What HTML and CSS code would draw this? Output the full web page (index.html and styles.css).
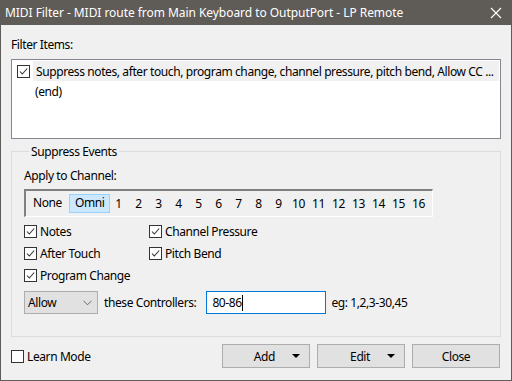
FILE: index.html
```html
<!DOCTYPE html>
<html lang="en">
<head>
<meta charset="UTF-8">
<title>MIDI Filter</title>
<link rel="stylesheet" href="styles.css">
</head>
<body>

<div class="window">
<!-- Title bar -->
<div class="titlebar">
<span class="title">MIDI Filter - MIDI route from Main Keyboard to OutputPort - LP Remote</span>
<svg class="close-x" width="12" height="12" viewBox="0 0 12 12"><path d="M1 1L11 11M11 1L1 11" stroke="#fff" stroke-width="1.2" fill="none"/></svg>
</div>

<div class="content">
<div class="label">Filter Items:</div>

<!-- Filter list -->
<div class="listbox">
<div class="list-row selected">
<span class="check on"><svg width="11" height="11" viewBox="0 0 11 11"><path d="M2 5.5L4.3 8L9.2 2.5" stroke="#333" stroke-width="1.1" fill="none"/></svg></span>
<span>Suppress notes, after touch, program change, channel pressure, pitch bend, Allow CC ...</span>
</div>
<div class="list-row end">(end)</div>
</div>

<!-- Suppress events group -->
<fieldset class="group">
<legend>Suppress Events</legend>
<div class="label">Apply to Channel:</div>

<div class="channels">
<span class="chan wide">None</span>
<span class="chan wide active">Omni</span>
<span class="chan">1</span>
<span class="chan">2</span>
<span class="chan">3</span>
<span class="chan">4</span>
<span class="chan">5</span>
<span class="chan">6</span>
<span class="chan">7</span>
<span class="chan">8</span>
<span class="chan">9</span>
<span class="chan">10</span>
<span class="chan">11</span>
<span class="chan">12</span>
<span class="chan">13</span>
<span class="chan">14</span>
<span class="chan">15</span>
<span class="chan">16</span>
</div>

<div class="options">
<label class="opt"><span class="check on"><svg width="11" height="11" viewBox="0 0 11 11"><path d="M2 5.5L4.3 8L9.2 2.5" stroke="#333" stroke-width="1.1" fill="none"/></svg></span>Notes</label>
<label class="opt"><span class="check on"><svg width="11" height="11" viewBox="0 0 11 11"><path d="M2 5.5L4.3 8L9.2 2.5" stroke="#333" stroke-width="1.1" fill="none"/></svg></span>Channel Pressure</label>
<label class="opt"><span class="check on"><svg width="11" height="11" viewBox="0 0 11 11"><path d="M2 5.5L4.3 8L9.2 2.5" stroke="#333" stroke-width="1.1" fill="none"/></svg></span>After Touch</label>
<label class="opt"><span class="check on"><svg width="11" height="11" viewBox="0 0 11 11"><path d="M2 5.5L4.3 8L9.2 2.5" stroke="#333" stroke-width="1.1" fill="none"/></svg></span>Pitch Bend</label>
<label class="opt"><span class="check on"><svg width="11" height="11" viewBox="0 0 11 11"><path d="M2 5.5L4.3 8L9.2 2.5" stroke="#333" stroke-width="1.1" fill="none"/></svg></span>Program Change</label>
</div>

<div class="ctrl-row">
<div class="combo">
<span>Allow</span>
<svg width="9" height="6" viewBox="0 0 9 6"><path d="M0.5 0.8L4.5 4.8L8.5 0.8" stroke="#666" stroke-width="1" fill="none"/></svg>
</div>
<span class="ctrl-label">these Controllers:</span>
<div class="textbox"><span class="caret">80-86</span></div>
<span class="hint">eg: 1,2,3-30,45</span>
</div>
</fieldset>

<!-- Bottom bar -->
<div class="bottom">
<label class="opt learn"><span class="check"></span>Learn Mode</label>
<div class="buttons">
<button type="button" class="btn split"><span class="btn-text">Add</span><span class="arrow"></span></button>
<button type="button" class="btn split"><span class="btn-text">Edit</span><span class="arrow"></span></button>
<button type="button" class="btn">Close</button>
</div>
</div>
</div>
</div>

</body>
</html>
```

FILE: styles.css
```css
/* General styling */
body {
    margin: 0;
    font-family: "Noto Sans", "Liberation Sans", sans-serif;
    font-size: 12px;
    letter-spacing: -0.4px;
    color: #000;
}

.window {
    width: 512px;
    height: 381px;
    box-sizing: border-box;
    border: 1px solid #5f5b57;
    border-top: none;
    background: #f0f0f0;
    display: flex;
    flex-direction: column;
}

/* Title bar */
.titlebar {
    height: 25px;
    background: #5f5b57;
    color: #fff;
    display: flex;
    align-items: center;
    justify-content: space-between;
    padding: 0 9px 0 4px;
    flex-shrink: 0;
}

.title {
    font-size: 12px;
    letter-spacing: -0.05px;
}

.close-x {
    margin-top: 1px;
}

.content {
    padding: 0 10px;
    display: flex;
    flex-direction: column;
    flex: 1;
}

.label {
    line-height: 15px;
}

.content > .label {
    margin-top: 12px;
}

/* List box */
.listbox {
    margin-top: 7px;
    height: 80px;
    box-sizing: border-box;
    border: 1px solid #828790;
    background: #fff;
    padding-top: 1px;
}

.list-row {
    height: 20px;
    display: flex;
    align-items: center;
    padding-left: 5px;
    white-space: nowrap;
}

.list-row.selected {
    background: linear-gradient(to right, #fff 21px, #f0f0f0 21px);
    margin-right: 1px;
}

.list-row .check {
    margin-right: 6px;
}

.list-row.end {
    padding-left: 23px;
    height: 20px;
}

/* Check boxes */
.check {
    width: 13px;
    height: 13px;
    box-sizing: border-box;
    border: 1px solid #333;
    background: #fff;
    display: inline-flex;
    align-items: center;
    justify-content: center;
    flex-shrink: 0;
}

/* Group box */
.group {
    margin: 5px 0 0;
    padding: 0 12px;
    border: 1px solid #dcdcdc;
    height: 193px;
    box-sizing: border-box;
}

.group legend {
    padding: 0 2px;
    margin-left: 5px;
    line-height: 15px;
}

.group .label {
    margin-top: 9px;
}

.channels {
    margin-top: 6px;
    width: 409px;
    height: 28px;
    box-sizing: border-box;
    border-top: 2px solid #808080;
    border-left: 2px solid #808080;
    border-bottom: 1px solid #fff;
    border-right: 1px solid #fff;
    display: flex;
    align-items: center;
}

.chan {
    width: 20px;
    text-align: center;
    line-height: 16px;
}

.chan.wide {
    width: auto;
    padding: 0 6px 1px;
    border: 1px solid transparent;
}

.chan.active {
    background: #cce8ff;
    border-color: #99d1ff;
    padding: 0 5px 1px;
    margin-right: -2px;
}

.options {
    margin-top: 7px;
    display: grid;
    grid-template-columns: 125px auto;
    row-gap: 7px;
}

.opt {
    display: flex;
    align-items: center;
    gap: 3px;
    line-height: 15px;
}

/* Controllers row */
.ctrl-row {
    margin-top: 8px;
    display: flex;
    align-items: center;
}

.combo {
    width: 74px;
    height: 23px;
    box-sizing: border-box;
    background: #e1e1e1;
    border: 1px solid #adadad;
    display: flex;
    align-items: center;
    justify-content: space-between;
    padding: 0 5px 0 3px;
}

.ctrl-label {
    margin-left: 6px;
}

.textbox {
    margin-left: 10px;
    width: 120px;
    height: 23px;
    box-sizing: border-box;
    border: 1px solid #0078d7;
    background: #fff;
    display: flex;
    align-items: center;
    padding-left: 5px;
}

.caret {
    border-right: 1px solid #000;
    line-height: 16px;
}

.hint {
    margin-left: 5px;
}

/* Bottom bar */
.bottom {
    display: flex;
    justify-content: space-between;
    align-items: center;
    margin-top: 7px;
}

.learn {
    margin-top: 1px;
}

.buttons {
    display: flex;
    gap: 7px;
    margin-right: 1px;
}

.btn {
    width: 88px;
    height: 24px;
    box-sizing: border-box;
    background: #e1e1e1;
    border: 1px solid #adadad;
    font-family: inherit;
    font-size: 12px;
    letter-spacing: -0.4px;
    color: #000;
    padding: 0;
}

.btn.split {
    display: flex;
    align-items: center;
    justify-content: flex-end;
    padding-right: 9px;
}

.btn-text {
    margin-right: 17px;
}

.arrow {
    width: 0;
    height: 0;
    border-left: 4px solid transparent;
    border-right: 4px solid transparent;
    border-top: 4px solid #000;
}
```
